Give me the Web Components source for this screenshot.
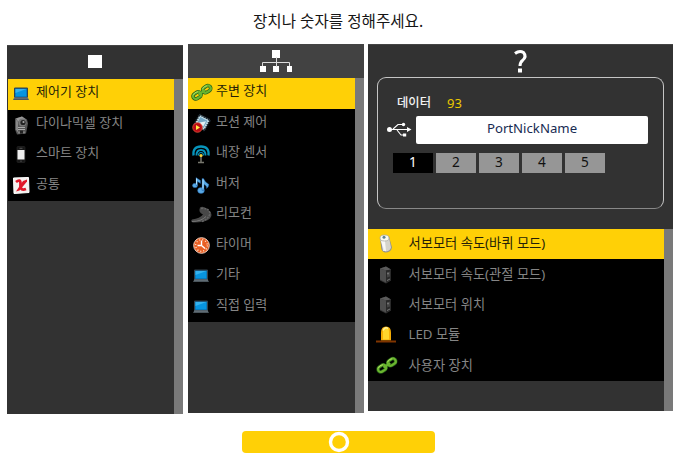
<!DOCTYPE html>
<html lang="ko"><head><meta charset="utf-8"><title>장치 선택</title>
<style>html,body{margin:0;background:#fff;overflow:hidden}body{font-family:"Noto Sans","Noto Sans CJK KR",sans-serif}</style></head>
<body><device-picker></device-picker>
<script>
const laptop='<path d="M3.500 4.500h13v9.500h-13z" fill="#0865a0" stroke="#35434d"/><path d="M4.500 5.500h11v7.500h-11z" fill="#0794df"/><path d="M4.500 5.500h11l-11 4z" fill="#35b2ee"/><path d="M3 14.500h14l1 2H2z" fill="#4a555c"/><path d="M3 14.500h14" stroke="#8b98a2" stroke-width=".7"/>';
const chain='<g fill="none" transform="rotate(-33 11 10)"><g stroke="#245c18" stroke-width="3.600"><rect x="1" y="7" width="8.500" height="5.500" rx="2.750"/><rect x="12.500" y="7" width="8.500" height="5.500" rx="2.750"/><path d="M7 9.800h8"/></g><g stroke="#6bb52f" stroke-width="2.200"><rect x="1" y="7" width="8.500" height="5.500" rx="2.750"/><rect x="12.500" y="7" width="8.500" height="5.500" rx="2.750"/><path d="M7 9.800h8"/></g><path d="M2 7.500q3-2 6-.4M13 7.500q3-2 6-.4" stroke="#b5df65" stroke-width=".8"/></g>';
const servo='<path d="M4 4l6-2 5 3v11l-5 3-6-3z" fill="#333"/><path d="M4 4l6-2 5 3-5 1z" fill="#5b5b5b"/><path d="M4 4l6 2v12l-6-3z" fill="#4e4e4e"/><path d="M10 6l5-1v11l-5 2z" fill="#292929"/><path d="M11 8l3-1v5l-3 1z" fill="#444"/><circle cx="12" cy="9" r="1" fill="#777"/><path d="M11 16l3-1.500" stroke="#777"/>';
const glyph={laptop,chain,servo,
dyna:'<path d="M4 4l7-2 5 3 1 4-2 10-9 1-2-5z" fill="#555"/><path d="M5 4l6-2 4 3-8 2z" fill="#999"/><path d="M5 5l2 2v11l-2-3z" fill="#888"/><circle cx="11.5" cy="8" r="4" fill="#777"/><circle cx="12" cy="8" r="2.6" fill="#222"/><circle cx="12.5" cy="7.5" r="1.1" fill="#aaa"/><path d="M7 13h7M7 15h7M8 17v2M13 17v2" stroke="#aaa"/><path d="M9 16h3v3H9z" fill="#222"/>',
phone:'<rect x="6" y="2" width="8" height="16" rx="1" fill="#171717" stroke="#292929" stroke-width=".6"/><path d="M6.500 5.500h7v9.500h-7z" fill="#eee"/><path d="M8.500 3.800h3" stroke="#555"/><circle cx="10" cy="16.600" r=".7" fill="#666"/>',
common:'<path d="M2.500 2.500l15-.5.5 15-15 1z" fill="#f5f1ef" stroke="#fff"/><path d="M5 6.500q4.500-3.500 4.500 1.500v2.500q0 5 5.500 3" fill="none" stroke="#e01829" stroke-width="2.800"/><path d="M16 4l-4 1.500-7 10.500 3.500-1 7.500-9z" fill="#e01829"/>',
motion:'<g transform="rotate(28 11 9)"><path d="M5 3h12v12H5z" fill="#c4dfe9"/><path d="M5 3h12v12H5z" fill="none" stroke="#1a252e" stroke-width="2" stroke-dasharray="1.4 1"/><path d="M7 5h8v8H7z" fill="#74a8c5"/><path d="M8 11l6-5v6z" fill="#e4f0f3"/></g><circle cx="6.500" cy="14" r="4.800" fill="#b90c15" stroke="#ed5b40" stroke-width=".7"/><path d="M5 11.500v5l4-2.500z" fill="#ffeb45"/>',
antenna:'<g fill="none" stroke="#0794bb"><path d="M2.500 12Q1.500 3 10 3t7.500 9" stroke-width="2.300"/><path d="M5.500 12q0-5.500 4.500-5.500t4.500 5.500" stroke-width="1.800"/><path d="M7.500 12q0-3 2.500-3t2.500 3" stroke-width="1.200"/></g><path d="M10 12v7M7 19h6" stroke="#77776e" stroke-width="1.500"/><circle cx="10" cy="12" r="1.600" fill="#f6d73d"/>',
music:'<g fill="#58a9e6" stroke="#1a5698" stroke-width=".4"><ellipse cx="4" cy="11" rx="2.600" ry="2.200"/><path d="M5 3l4.500 3v3L6.500 7v4H5z"/><ellipse cx="10" cy="16" rx="3.400" ry="3"/><path d="M11 4h1.500q1 3 5.500 6-.5 3-2.500 4 .5-3-2.500-4v6h-2z"/></g><path d="M5.500 4v6M12 5v9" stroke="#bce8ff" stroke-width=".9"/>',
remote:'<path d="M9 3q3-2 8 2 6 5 2 9-4 4-17 4-3-1-1-3 8-1 11-5-5-2-3-7z" fill="#484848"/><path d="M10 4q8-1 9 5-2 6-8 8" fill="none" stroke="#656565" stroke-width="1.500" stroke-dasharray="2 1"/><path d="M1 17q9 0 14-5" stroke="#777" fill="none"/>',
clock:'<circle cx="10.500" cy="10" r="7.800" fill="#e95f24" stroke="#f4d0bd" stroke-width="1"/><circle cx="10.500" cy="10" r="5.800" fill="none" stroke="#fff0df" stroke-width="1.200" stroke-dasharray="1 2.040"/><path d="M10.500 5v5h-4M10.500 10l3.500 3" fill="none" stroke="#fff" stroke-width="1.400"/>',
wheel:'<path d="M4 4q3-4 9-1l3 11q-1 5-7 5-4-1-4-6z" fill="#91908b"/><path d="M4 6q5 3 9-2l2 10q-1 4-6 4z" fill="#d5d4cc"/><path d="M5 7l4 .5 1 10H7z" fill="#fff" opacity=".8"/><ellipse cx="8.500" cy="4.500" rx="4.500" ry="3" fill="#fbfbef" stroke="#a6a69f" stroke-width=".7"/><circle cx="8" cy="3.800" r="1.500" fill="#5e8195"/>',
led:'<path d="M5 16V8q0-6 5-6t5 6v8z" fill="#f5ad05"/><path d="M7 15V7q0-4 3-4t3 4v8z" fill="#ffd62c"/><path d="M7 6q2-4 5-2" fill="none" stroke="#fff19a" stroke-width="1.500"/><path d="M0 17h20" stroke="#803500" stroke-width="2"/>'};
function define(name,html,setup){customElements.define(name,class extends HTMLElement{constructor(){super();this.attachShadow({mode:'open'})}connectedCallback(){this.shadowRoot.innerHTML=html;if(setup)setup(this,this.shadowRoot)}})}
define('device-icon','<style>:host{display:block;width:20px;height:20px}svg{display:block;overflow:visible}</style><svg width="20" height="20" viewBox="0 0 20 20"></svg>',(e,r)=>{r.querySelector('svg').innerHTML=glyph[e.getAttribute('name')]||''});
define('device-row','<style>:host{display:flex;align-items:center;flex:1;min-height:0;padding-left:var(--icon-inset,3px);box-sizing:border-box;background:#000;color:#858585;font-size:var(--row-size,13px)}:host([active]){background:#ffd006;color:#251f08}span{margin-left:var(--text-gap,5px);line-height:20px;white-space:nowrap;transform:translateY(var(--text-shift,-3px))}device-icon{transform:translateY(-.5px)}</style><span><slot></slot></span>',(e,r)=>{const i=document.createElement('device-icon');i.setAttribute('name',e.getAttribute('icon'));r.querySelector('span').before(i)});
define('device-panel',`<style>:host{display:flex;flex-direction:column;box-sizing:border-box;background:#323232}header{height:var(--head,34px);flex:none;background:var(--head-bg,#323232);box-sizing:border-box;border-top:1px solid #444}.body{display:flex;flex:1;min-height:0;padding-left:var(--list-left,0px)}.list{display:flex;flex-direction:column;flex:1;height:var(--list-h)}.rail{width:9px;background:#797979}</style><header><slot name="head"></slot></header><div class="body"><div class="list"><slot></slot></div><div class="rail"></div></div>`);
define('port-button','<style>:host{display:grid;place-items:center;width:40px;height:20px;background:#969696;color:#111;font-size:13.6px;line-height:18px;padding-bottom:2px;box-sizing:border-box}:host([active]){background:#000;color:#fff}</style><slot></slot>');
define('port-settings',`<style>:host{display:block;height:132px;margin:-1px 9px 21px;box-sizing:border-box;border:1px solid #c5c5c5;border-bottom-color:#888;border-radius:9px;padding:14px 15px 0 9px}.data{display:flex;height:22px;padding-left:10px;color:#f2f2f2;font-size:12.300px;line-height:22px}.data b{font-weight:500;width:50px}.data span{color:#ebc900;font-size:13px}.port{display:flex;margin-top:2px}.port svg{width:29px;height:28px;flex:none}.name{width:232px;height:28px;border-radius:2px;background:#fff;color:#172b52;font-size:13.200px;line-height:25px;text-align:center}.tabs{display:flex;gap:3px;margin:9px 0 0 6px}</style>
<div class="data"><b>데이터</b><span>93</span></div><div class="port"><svg viewBox="0 0 29 28"><path d="M3 13.500h18M6 13l5-4.500h5M10 14l4 5h3" fill="none" stroke="#fff" stroke-width="1.100"/><circle cx="2.500" cy="13.500" r="2.500" fill="#fff"/><circle cx="16.500" cy="8.500" r="1.700" fill="#fff"/><path d="M16 17.500h3.200v3H16zM20 11l4.500 2.500-4.500 2.500z" fill="#fff"/></svg><div class="name">PortNickName</div></div><div class="tabs"><port-button active>1</port-button><port-button>2</port-button><port-button>3</port-button><port-button>4</port-button><port-button>5</port-button></div>`);
define('confirm-button','<style>:host{display:grid;place-items:center;width:193px;height:22px;border-radius:4px;background:#ffd006}svg{display:block}</style><svg width="22" height="22"><circle cx="11" cy="11" r="8.5" fill="none" stroke="#fff" stroke-width="3.4"/></svg>');
define('device-picker',`<style>:host{display:block;width:673px;height:469px;background:#fff}h1{font-size:15.6px;font-weight:400;line-height:24px;height:35px;padding:9px 0 0 253px;margin:0;color:#151515;white-space:nowrap}main{display:flex;align-items:flex-start;height:387px;padding-left:7px;gap:5px}.one{width:176px;height:369px;margin-top:1px;--list-left:1px;--list-h:122px}.two{width:176px;height:369px;--head-bg:#424242;--list-h:244px}.three{width:305px;height:367px;margin-left:-1px;--head:185px;--list-h:152px;--icon-inset:8px;--text-gap:12.5px;--row-size:13.25px;--text-shift:-1px}.symbol{display:block;margin:auto}footer{padding-left:242px}
</style><h1>장치나 숫자를 정해주세요.</h1><main>
<device-panel class="one"><svg slot="head" class="symbol" width="176" height="32"><path d="M81 9h14v13H81z" fill="#fff"/></svg><device-row icon="laptop" active>제어기 장치</device-row><device-row icon="dyna">다이나믹셀 장치</device-row><device-row icon="phone">스마트 장치</device-row><device-row icon="common">공통</device-row></device-panel>
<device-panel class="two"><svg slot="head" class="symbol" width="176" height="32"><path d="M84 5h8v8h-8zM72 21h6v6h-6zM85 21h6v6h-6zM99 21h5v6h-5z" fill="#fff"/><path d="M74.500 21v-3.500h27V21M88.500 12v10" fill="none" stroke="#ddd" stroke-width="1"/></svg><device-row icon="chain" active>주변 장치</device-row><device-row icon="motion">모션 제어</device-row><device-row icon="antenna">내장 센서</device-row><device-row icon="music">버저</device-row><device-row icon="remote">리모컨</device-row><device-row icon="clock">타이머</device-row><device-row icon="laptop">기타</device-row><device-row icon="laptop">직접 입력</device-row></device-panel>
<device-panel class="three"><svg slot="head" class="symbol" width="305" height="33"><path d="M147 8.500Q151.500 5 155.500 7.500q3.500 4-1 8-2.500 2-2.500 5.500" fill="none" stroke="#fff" stroke-width="3"/><path d="M150 23.500h4v4h-4z" fill="#fff"/></svg><port-settings slot="head"></port-settings><device-row icon="wheel" active>서보모터 속도(바퀴 모드)</device-row><device-row icon="servo">서보모터 속도(관절 모드)</device-row><device-row icon="servo">서보모터 위치</device-row><device-row icon="led">LED 모듈</device-row><device-row icon="chain">사용자 장치</device-row></device-panel></main><footer><confirm-button></confirm-button></footer>`);
</script></body></html>
